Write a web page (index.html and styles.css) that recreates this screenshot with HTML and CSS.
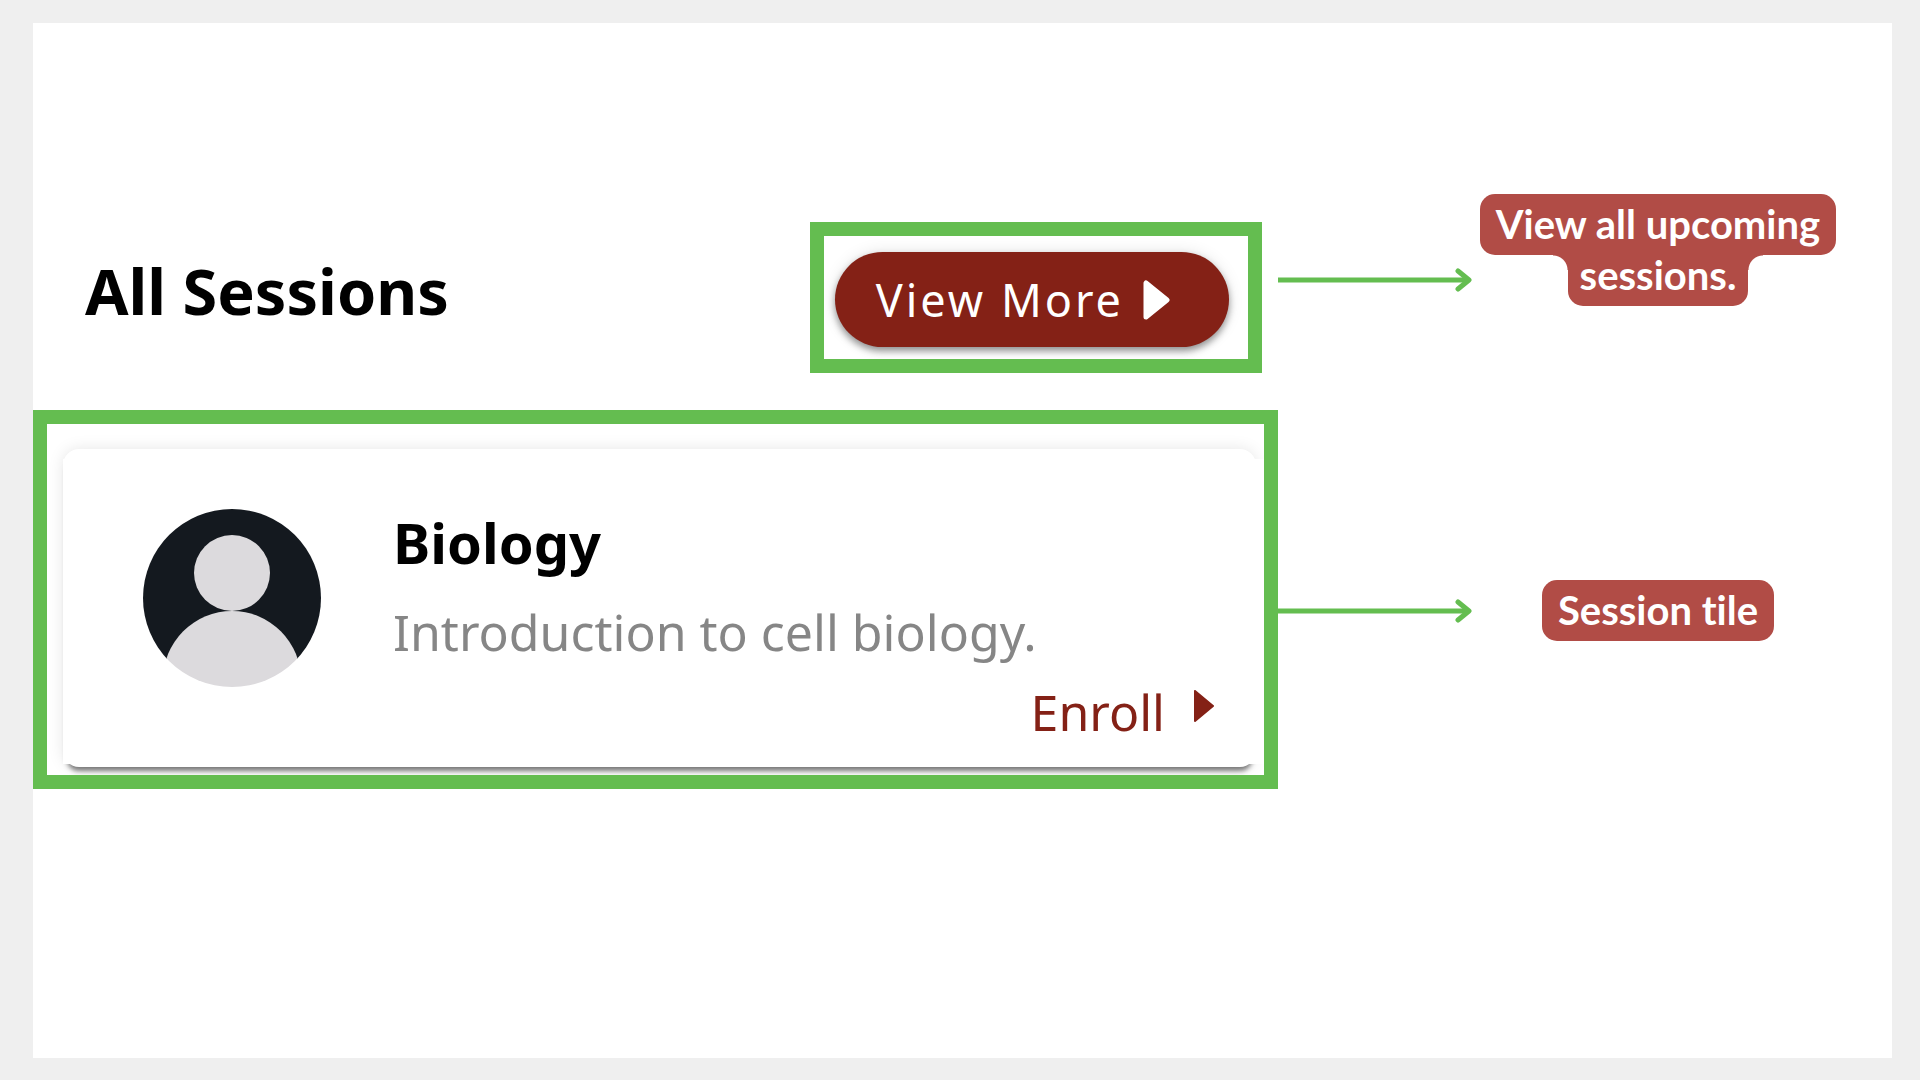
FILE: index.html
```html
<!DOCTYPE html>
<html lang="en">
<head>
<meta charset="utf-8">
<meta name="viewport" content="width=device-width, initial-scale=1">
<title>All Sessions</title>
<link rel="stylesheet" href="styles.css">
</head>
<body>
<main class="sheet">
  <header class="sessions-header">
    <h1 class="title">All Sessions</h1>
    <div class="highlight button-highlight">
      <button class="view-more" type="button">View More
        <svg class="view-more-icon" viewBox="0 0 28 42" aria-hidden="true"><path d="M4 4V38L25 21Z" fill="#fff" stroke="#fff" stroke-width="5" stroke-linejoin="round"/></svg>
      </button>
    </div>
  </header>
  <aside class="note note-header">
    <svg class="arrow" viewBox="0 0 194 24" aria-hidden="true"><path d="M0 12H189"/><path class="arrow-head" d="M180 3L191 12L180 21"/></svg>
    <p class="label-wrap">
      <span class="label label-first">View all upcoming</span>
      <span class="label label-second">sessions.</span>
    </p>
  </aside>
  <section class="highlight tile-highlight">
    <article class="card">
      <div class="card-body">
        <svg class="avatar" viewBox="0 0 178 178" role="img" aria-label="Profile">
          <clipPath id="disc"><circle cx="89" cy="89" r="89"/></clipPath>
          <g clip-path="url(#disc)"><path fill="#14191f" d="M0 0H178V150H0Z"/><circle cx="89" cy="64" r="38" fill="#dcdadd"/><circle cx="89" cy="171" r="69" fill="#dcdadd"/></g>
        </svg>
        <div class="card-text">
          <h2 class="subject">Biology</h2>
          <p class="summary">Introduction to cell biology.</p>
          <a class="enroll" href="#enroll">Enroll
            <svg class="enroll-icon" viewBox="0 0 20 32" aria-hidden="true"><path d="M1 1V31L19 16Z" fill="#842116" stroke="#842116" stroke-width="2" stroke-linejoin="round"/></svg>
          </a>
        </div>
      </div>
    </article>
  </section>
  <aside class="note note-tile">
    <svg class="arrow" viewBox="0 0 194 24" aria-hidden="true"><path d="M0 12H189"/><path class="arrow-head" d="M180 3L191 12L180 21"/></svg>
    <p class="label-wrap"><span class="label label-first">Session tile</span></p>
  </aside>
</main>
</body>
</html>
```
FILE: styles.css
```css
* { box-sizing: border-box; }
body {
  margin: 0;
  min-height: 100vh;
  padding: 23px 28px 22px 33px;
  display: flex;
  background: #efefef;
  color: #000;
  font-family: "Noto Sans", sans-serif;
}
h1, h2, p { margin: 0; }
.sheet {
  flex: 1;
  display: grid;
  grid-template-columns: minmax(0, 1245fr) minmax(0, 614fr);
  align-content: start;
  row-gap: 37px;
  padding-top: 171px;
  background: #fff;
}
.sessions-header {
  display: flex;
  justify-content: space-between;
  align-items: flex-end;
  padding: 28px 16px 0 52px;
}
.title {
  font-size: 63px;
  line-height: 88px;
  padding-bottom: 38px;
}
.highlight {
  border: 14px solid #64bd50;
  overflow: hidden;
}
.button-highlight { padding: 16px 19px 12px 11px; }
.view-more {
  display: flex;
  align-items: center;
  gap: 18px;
  height: 95px;
  padding: 0 59px 0 41px;
  border: 0;
  border-radius: 48px;
  background: #842116;
  color: #fff;
  font: 400 45px/60px "Noto Sans", sans-serif;
  letter-spacing: 3px;
  box-shadow: 0 4px 7px rgba(0, 0, 0, .4), 0 0 16px rgba(0, 0, 0, .1);
}
.view-more-icon { width: 28px; height: 42px; }
.note {
  display: flex;
  align-items: flex-start;
  padding-right: 48px;
}
.note-tile {
  align-items: center;
  padding-top: 22px;
}
.arrow {
  flex: none;
  width: 194px;
  height: 24px;
  fill: none;
  stroke: #64bd50;
  stroke-width: 5;
}
.arrow-head {
  stroke-linecap: round;
  stroke-linejoin: round;
}
.note-header .arrow { margin-top: 74px; }
.label-wrap {
  flex: 1;
  display: flex;
  flex-direction: column;
  align-items: center;
  color: #fff;
  font: 700 40px/51px Lato, sans-serif;
  font-variant-ligatures: none;
}
.label {
  background: #b14c46;
  white-space: nowrap;
}
.label-first {
  padding: 5px 16px;
  border-radius: 15px;
}
.label-second {
  position: relative;
  margin-top: -5px;
  padding: 0 12px 5px;
  border-radius: 0 0 15px 15px;
}
.label-second::before,
.label-second::after {
  content: "";
  position: absolute;
  top: 5px;
  width: 15px;
  height: 15px;
}
.label-second::before {
  right: 100%;
  background: radial-gradient(circle at 0 100%, transparent 14px, #b14c46 15px);
}
.label-second::after {
  left: 100%;
  background: radial-gradient(circle at 100% 100%, transparent 14px, #b14c46 15px);
}
.tile-highlight { padding: 25px 8px 8px 16px; }
.card {
  padding: 10px 0 3px;
  border-radius: 16px;
  background: #fff;
  box-shadow: 0 8px 5px -4px rgba(0, 0, 0, .5), 0 0 16px rgba(0, 0, 0, .1);
}
.card-body {
  display: flex;
  align-items: flex-start;
  gap: 72px;
  margin-right: -8px;
  padding: 48px 50px 17px 80px;
  background: #fff;
}
.avatar {
  flex: none;
  width: 178px;
  height: 178px;
  margin-top: 2px;
}
.card-text {
  flex: 1;
  display: flex;
  flex-direction: column;
}
.subject {
  font-size: 56px;
  line-height: 70px;
}
.summary {
  margin-top: 20px;
  color: #868686;
  font-size: 50px;
  line-height: 70px;
}
.enroll {
  align-self: flex-end;
  display: flex;
  align-items: flex-start;
  gap: 29px;
  margin-top: 10px;
  color: #842116;
  font-size: 50px;
  line-height: 70px;
  text-decoration: none;
}
.enroll-icon {
  width: 20px;
  height: 32px;
  margin-top: 13px;
}
```
